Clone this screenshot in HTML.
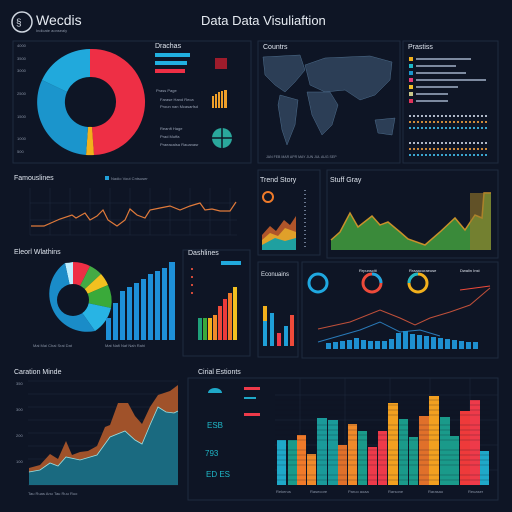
<!DOCTYPE html><html><head><style>
html,body{margin:0;padding:0;background:#0e1525;width:512px;height:512px;overflow:hidden}
text{font-family:"Liberation Sans",sans-serif}
</style></head><body>
<svg width="512" height="512" viewBox="0 0 512 512" xmlns="http://www.w3.org/2000/svg">
<rect width="512" height="512" fill="#0e1525"/>
<!-- header -->
<circle cx="22" cy="22" r="10" fill="none" stroke="#cfd6e0" stroke-width="1.5"/>
<text x="16" y="26" font-size="10" fill="#cfd6e0">§</text>
<text x="36" y="25" font-size="14" fill="#e6ebf2" font-family="Liberation Serif">Wecdis</text>
<text x="36" y="32" font-size="4" fill="#8a94a6">Indicate aonsealy</text>
<text x="201" y="25" font-size="13" fill="#e6ebf2">Data Data Visuliaftion</text>
<!-- panels -->
<g fill="none" stroke="#1f2a3e" stroke-width="1">
<rect x="13" y="41" width="238" height="122"/>
<rect x="258" y="41" width="142" height="122"/>
<rect x="403" y="41" width="95" height="122"/>
<rect x="258" y="170" width="62" height="85"/>
<rect x="327" y="170" width="171" height="88"/>
<rect x="183" y="250" width="67" height="106"/>
<rect x="258" y="262" width="40" height="95"/>
<rect x="302" y="262" width="196" height="96"/>
<rect x="188" y="378" width="310" height="122"/>
</g>
<!-- donut 1 -->
<g transform="translate(90,102)">
<path d="M0,-53 A53,53 0 0 1 4,53 L2,25 A25,25 0 0 0 0,-25Z" fill="#ee2f45"/>
<path d="M4,53 A53,53 0 0 1 -4,53 L-2,25 A25,25 0 0 1 2,25Z" fill="#f2b01c"/>
<path d="M-4,53 A53,53 0 0 1 -48,-22 L-23,-10 A25,25 0 0 0 -2,25Z" fill="#1b95cc"/>
<path d="M-48,-22 A53,53 0 0 1 0,-53 L0,-25 A25,25 0 0 0 -23,-10Z" fill="#21a9dc"/>
</g>
<g font-size="4" fill="#8a94a6">
<text x="17" y="47">4000</text><text x="17" y="60">3500</text><text x="17" y="72">3000</text><text x="17" y="95">2500</text><text x="17" y="118">1500</text><text x="17" y="140">1000</text><text x="17" y="153">500</text>
</g>
<text x="155" y="48" font-size="7" fill="#dfe5ee">Drachas</text>
<rect x="155" y="53" width="35" height="4" fill="#21b0e0"/>
<rect x="155" y="61" width="32" height="4" fill="#21b0e0"/>
<rect x="155" y="69" width="30" height="4" fill="#ee2f45"/>
<rect x="215" y="58" width="12" height="11" fill="#9e1c2c"/>
<g font-size="4" fill="#9aa4b6"><text x="156" y="92">Prass Page</text><text x="160" y="101">Farase Hand Reca</text><text x="160" y="108">Proun nan Mcasarfsd</text>
<text x="160" y="130">Reanft Hage</text><text x="160" y="138">Prad Muffa</text><text x="160" y="146">Praeacalsa Rauanasr</text></g>
<g fill="#f0a02a"><rect x="212" y="96" width="2" height="12"/><rect x="215" y="94" width="2" height="14"/><rect x="218" y="92" width="2" height="16"/><rect x="221" y="91" width="2" height="17"/><rect x="224" y="90" width="3" height="18"/></g>
<circle cx="222" cy="138" r="10" fill="#2aa89c"/><path d="M212,138H232M222,128V148" stroke="#0e1525" stroke-width="1.5"/>
<!-- map -->
<text x="263" y="49" font-size="7" fill="#dfe5ee">Countrs</text>
<g fill="#2c3e56" stroke="#4d6d8c" stroke-width="0.5">
<path d="M263,57 L300,55 L305,70 L295,82 L285,92 L275,85 L265,75Z"/>
<path d="M280,95 L298,100 L295,125 L287,145 L282,130 L278,105Z"/>
<path d="M305,65 L325,58 L370,56 L392,62 L390,80 L375,95 L360,100 L345,90 L325,92 L310,85Z"/>
<path d="M307,92 L330,92 L338,105 L332,125 L322,135 L312,115Z"/>
<path d="M375,120 L395,118 L392,135 L378,133Z"/>
</g>
<g font-size="3.5" fill="#8a94a6"><text x="266" y="158">JAN FEB MAR APR MAY JUN JUL AUG SEP</text></g>
<text x="408" y="49" font-size="7" fill="#dfe5ee">Prastiss</text>
<g><rect x="409" y="57" width="4" height="4" fill="#f2b01c"/><rect x="409" y="64" width="4" height="4" fill="#1fb8c8"/><rect x="409" y="71" width="4" height="4" fill="#1b95cc"/><rect x="409" y="78" width="4" height="4" fill="#e73a78"/><rect x="409" y="85" width="4" height="4" fill="#f2c02a"/><rect x="409" y="92" width="4" height="4" fill="#c8c88a"/><rect x="409" y="99" width="4" height="4" fill="#e0335a"/></g>
<g fill="#7d8aa0"><rect x="416" y="58" width="55" height="2"/><rect x="416" y="65" width="40" height="2"/><rect x="416" y="72" width="50" height="2"/><rect x="416" y="79" width="70" height="2"/><rect x="416" y="86" width="42" height="2"/><rect x="416" y="93" width="32" height="2"/><rect x="416" y="100" width="32" height="2"/></g>
<g stroke-dasharray="2 2" stroke-width="2"><path d="M409,116H488" stroke="#b0b8c8"/><path d="M409,122H488" stroke="#d08a3a"/><path d="M409,128H488" stroke="#3aa6d0"/><path d="M409,143H488" stroke="#b0b8c8"/><path d="M409,149H488" stroke="#d08a3a"/><path d="M409,155H488" stroke="#3aa6d0"/></g>
<!-- line chart 1 -->
<text x="14" y="180" font-size="7" fill="#dfe5ee">Famouslines</text>
<rect x="105" y="176" width="4" height="4" fill="#21a0d8"/><text x="111" y="180" font-size="4" fill="#8a94a6">Nadio Vout Cntsuser</text>
<g stroke="#1f2a3e" stroke-width="0.5"><path d="M30,188V235M50,188V235M70,188V235M90,188V235M110,188V235M130,188V235M150,188V235M170,188V235M190,188V235M210,188V235M230,188V235"/><path d="M30,203H237M30,220H237M30,235H237"/></g>
<path d="M31,226 L44,226 L60,219 L72,215 L76,218 L85,213 L90,220 L97,216 L103,210 L108,220 L117,226 L125,220 L130,209 L137,215 L145,218 L150,210 L160,208 L170,206 L180,210 L190,206 L200,203 L205,210 L212,209 L220,211 L230,211 L236,202" fill="none" stroke="#e07a3a" stroke-width="1.2"/>
<!-- trend story -->
<text x="260" y="182" font-size="7" fill="#dfe5ee">Trend Story</text>
<circle cx="268" cy="197" r="5" fill="none" stroke="#ee7a2a" stroke-width="2"/>
<path d="M262,250 L262,235 L270,226 L276,231 L284,220 L290,225 L296,216 L296,250Z" fill="#b0552a"/>
<path d="M262,250 L262,240 L270,233 L278,236 L285,228 L296,232 L296,250Z" fill="#e0a02a"/>
<path d="M262,250 L262,245 L275,238 L285,241 L296,238 L296,250Z" fill="#1fa0a0"/>
<g stroke="#6a7890" stroke-dasharray="1 3" stroke-width="2"><path d="M305,190V250"/></g>
<!-- stuff gray -->
<text x="330" y="182" font-size="7" fill="#dfe5ee">Stuff Gray</text>
<path d="M331,250 L331,240 L340,232 L350,213 L358,227 L372,216 L380,225 L388,222 L400,232 L408,239 L425,245 L440,232 L455,218 L465,230 L475,215 L482,218 L484,193 L491,193 L491,250Z" fill="#3a8a3a"/>
<path d="M331,240 L340,232 L350,213 L358,227 L372,216 L380,225 L388,222 L400,232 L408,239 L425,245 L440,232 L455,218 L465,230 L475,215 L482,218 L484,193 L491,193" fill="none" stroke="#c9902a" stroke-width="1.5"/>
<rect x="470" y="193" width="21" height="57" fill="#9a7a2a" opacity="0.6"/>
<!-- event widths -->
<text x="14" y="254" font-size="7" fill="#dfe5ee">Eleorl Wlathins</text>
<g transform="translate(73,300)">
<path d="M0,0 L0,-38 A38,38 0 0 1 -8,-37Z" fill="#bfefff"/>
<path d="M0,0 L0,-38 A38,38 0 0 1 17,-34Z" fill="#ee2f45"/>
<path d="M0,0 L17,-34 A38,38 0 0 1 28,-26Z" fill="#44aa44"/>
<path d="M0,0 L28,-26 A38,38 0 0 1 35,-15Z" fill="#f2c020"/>
<path d="M0,0 L35,-15 A38,38 0 0 1 38,8Z" fill="#3aaa3a"/>
<path d="M0,0 L38,8 A38,38 0 0 1 22,31Z" fill="#28b4e4"/>
<path d="M0,0 L22,31 A38,38 0 0 1 -8,-37Z" fill="#1a8cc8"/>
<circle r="16" fill="#0e1525"/>
</g>
<g fill="#1e90d8"><rect x="106" y="318" width="5" height="22"/><rect x="113" y="303" width="5" height="37"/><rect x="120" y="291" width="5" height="49"/><rect x="127" y="287" width="5" height="53"/><rect x="134" y="283" width="5" height="57"/><rect x="141" y="279" width="5" height="61"/><rect x="148" y="274" width="5" height="66"/><rect x="155" y="271" width="5" height="69"/><rect x="162" y="268" width="5" height="72"/><rect x="169" y="262" width="6" height="78"/></g>
<g font-size="4" fill="#8a94a6"><text x="33" y="347">Mai Mai Chai Srai Dat</text><text x="105" y="347">Mat Nafi Naf  Nah Rahi</text></g>
<!-- dashlines -->
<text x="188" y="255" font-size="7" fill="#dfe5ee">Dashlines</text>
<rect x="221" y="261" width="20" height="4" fill="#21a9dc"/>
<g fill="#d04a3a"><rect x="191" y="268" width="2" height="2"/><rect x="191" y="276" width="2" height="2"/><rect x="191" y="284" width="2" height="2"/><rect x="191" y="292" width="2" height="2"/></g>
<rect x="198" y="318" width="4" height="22" fill="#1fa07a"/><rect x="203" y="318" width="4" height="22" fill="#3aaa3a"/><rect x="208" y="318" width="4" height="22" fill="#f2b01c"/><rect x="213" y="315" width="4" height="25" fill="#f08a2a"/><rect x="218" y="306" width="4" height="34" fill="#ee4a3a"/><rect x="223" y="299" width="4" height="41" fill="#ee3a3a"/><rect x="228" y="293" width="4" height="47" fill="#f07a2a"/><rect x="233" y="287" width="4" height="53" fill="#f2c020"/>
<!-- small panel -->
<text x="261" y="276" font-size="6" fill="#dfe5ee">Econuains</text>
<rect x="263" y="306" width="4" height="40" fill="#1fa0d8"/><rect x="263" y="306" width="4" height="15" fill="#f2b01c"/><rect x="270" y="313" width="4" height="33" fill="#1fa0d8"/><rect x="277" y="333" width="4" height="13" fill="#ee3a4a"/><rect x="284" y="326" width="4" height="20" fill="#1fa0d8"/><rect x="290" y="315" width="4" height="31" fill="#ee4a3a"/>
<!-- gauges -->
<circle cx="318" cy="283" r="9" fill="none" stroke="#1fa8e0" stroke-width="3"/>
<circle cx="372" cy="283" r="9" fill="none" stroke="#ee4a3a" stroke-width="3"/>
<path d="M372,274 A9,9 0 0 1 381,283" fill="none" stroke="#1fa8e0" stroke-width="3"/>
<circle cx="418" cy="283" r="9" fill="none" stroke="#f2b01c" stroke-width="3"/>
<path d="M418,274 A9,9 0 0 0 409,283" fill="none" stroke="#1fb8c8" stroke-width="3"/>
<g font-size="4" fill="#dfe5ee"><text x="359" y="272">Rrpunsciti</text><text x="409" y="272">Rraaacuraeuse</text><text x="460" y="272">Dwalin Inst</text></g>
<path d="M460,290 L490,286" stroke="#ee4a3a" stroke-width="1" fill="none"/>
<!-- line chart 2 -->
<path d="M318,329 L350,322 L380,310 L400,318 L415,325 L430,318 L450,312 L470,305 L490,288" fill="none" stroke="#c0503a" stroke-width="1"/>
<path d="M318,342 L360,330 L380,322 L400,332 L420,330 L440,336" fill="none" stroke="#2a7ab8" stroke-width="1"/>
<g fill="#1e90d0"><rect x="326" y="343" width="5" height="6"/><rect x="333" y="342" width="5" height="7"/><rect x="340" y="341" width="5" height="8"/><rect x="347" y="340" width="5" height="9"/><rect x="354" y="338" width="5" height="11"/><rect x="361" y="340" width="5" height="9"/><rect x="368" y="341" width="5" height="8"/><rect x="375" y="341" width="5" height="8"/><rect x="382" y="341" width="5" height="8"/><rect x="389" y="339" width="5" height="10"/><rect x="396" y="333" width="5" height="16"/><rect x="403" y="331" width="5" height="18"/><rect x="410" y="334" width="5" height="15"/><rect x="417" y="335" width="5" height="14"/><rect x="424" y="336" width="5" height="13"/><rect x="431" y="337" width="5" height="12"/><rect x="438" y="338" width="5" height="11"/><rect x="445" y="339" width="5" height="10"/><rect x="452" y="340" width="5" height="9"/><rect x="459" y="341" width="5" height="8"/><rect x="466" y="342" width="5" height="7"/><rect x="473" y="342" width="5" height="7"/></g>
<!-- bottom left area -->
<text x="14" y="374" font-size="7" fill="#dfe5ee">Caration Minde</text>
<g stroke="#1f2a3e" stroke-width="0.5"><path d="M28,381H178M28,394H178M28,407H178M28,420H178M28,433H178M28,446H178M28,459H178M28,472H178M28,485H178"/></g>
<path d="M29,485 L29,468 L40,465 L50,454 L58,459 L66,441 L72,455 L80,452 L88,451 L97,446 L105,427 L110,425 L118,403 L128,403 L135,416 L142,424 L150,407 L158,395 L170,391 L178,385 L178,485Z" fill="#a0522a"/>
<path d="M29,485 L29,472 L40,470 L50,463 L58,466 L66,457 L80,460 L97,455 L110,437 L125,431 L135,440 L142,444 L150,425 L158,407 L166,412 L174,413 L178,411 L178,485Z" fill="#1a6a80"/>
<path d="M29,472 L40,470 L50,463 L58,466 L66,457 L80,460 L97,455 L110,437 L125,431 L135,440 L142,444 L150,425 L158,407 L166,412 L174,413 L178,411" fill="none" stroke="#9adfe0" stroke-width="0.8"/>
<g font-size="4" fill="#8a94a6"><text x="16" y="385">350</text><text x="16" y="411">300</text><text x="16" y="437">200</text><text x="16" y="463">100</text><text x="28" y="495">Tau  Ruas Anu  Tau  Ruu  Ruo</text></g>
<!-- bottom right -->
<text x="198" y="374" font-size="7" fill="#dfe5ee">Cirial Estionts</text>
<path d="M208,393 A7,5 0 0 1 222,393Z" fill="#1fa8c8"/>
<g font-size="8" fill="#1fb8c8"><text x="207" y="428">ESB</text><text x="205" y="456">793</text><text x="206" y="477">ED ES</text></g>
<rect x="244" y="387" width="16" height="3" fill="#ee3a4a"/><rect x="244" y="413" width="16" height="3" fill="#ee3a4a"/><rect x="244" y="397" width="12" height="2" fill="#1fa8c8"/>
<g stroke="#1f2a3e" stroke-width="0.5" fill="none"><path d="M275,395H498M275,420H498M275,445H498M275,470H498M300,378V485M345,378V485M390,378V485M430,378V485M470,378V485"/></g>
<g>
<rect x="277" y="440" width="9" height="45" fill="#1fa8c8"/><rect x="288" y="440" width="9" height="45" fill="#1a9a8a"/>
<rect x="297" y="435" width="9" height="50" fill="#f07a2a"/><rect x="307" y="454" width="9" height="31" fill="#f08a2a"/>
<rect x="317" y="418" width="10" height="67" fill="#1a9a9a"/><rect x="328" y="420" width="10" height="65" fill="#1a9a9a"/>
<rect x="338" y="445" width="9" height="40" fill="#e0702a"/><rect x="348" y="424" width="9" height="61" fill="#f08a2a"/><rect x="358" y="431" width="9" height="54" fill="#1a9a8a"/>
<rect x="368" y="447" width="9" height="38" fill="#ee3a4a"/><rect x="378" y="431" width="9" height="54" fill="#ee3a4a"/><rect x="388" y="403" width="10" height="82" fill="#f2a020"/>
<rect x="399" y="419" width="9" height="66" fill="#1a9a8a"/><rect x="409" y="437" width="9" height="48" fill="#1a9a8a"/>
<rect x="419" y="416" width="10" height="69" fill="#e0702a"/><rect x="429" y="396" width="10" height="89" fill="#f2a020"/>
<rect x="440" y="417" width="10" height="68" fill="#1a9a8a"/><rect x="450" y="436" width="9" height="49" fill="#1a9a8a"/>
<rect x="460" y="411" width="10" height="74" fill="#ee3a3a"/><rect x="470" y="400" width="10" height="85" fill="#ee3a4a"/><rect x="480" y="451" width="9" height="34" fill="#1fa8c8"/>
</g>
<g stroke="#0e1525" stroke-width="0.6" opacity="0.5"><path d="M275,400H490M275,405H490M275,410H490M275,415H490M275,425H490M275,430H490M275,435H490M275,440H490M275,450H490M275,455H490M275,460H490M275,465H490M275,475H490M275,480H490"/></g>
<g font-size="4" fill="#8a94a6"><text x="276" y="493">Rekerus</text><text x="310" y="493">Rasecore</text><text x="348" y="493">Paruo aoaa</text><text x="388" y="493">Rarsone</text><text x="428" y="493">Rarasao</text><text x="468" y="493">Reuaser</text></g>
</svg>
</body></html>
